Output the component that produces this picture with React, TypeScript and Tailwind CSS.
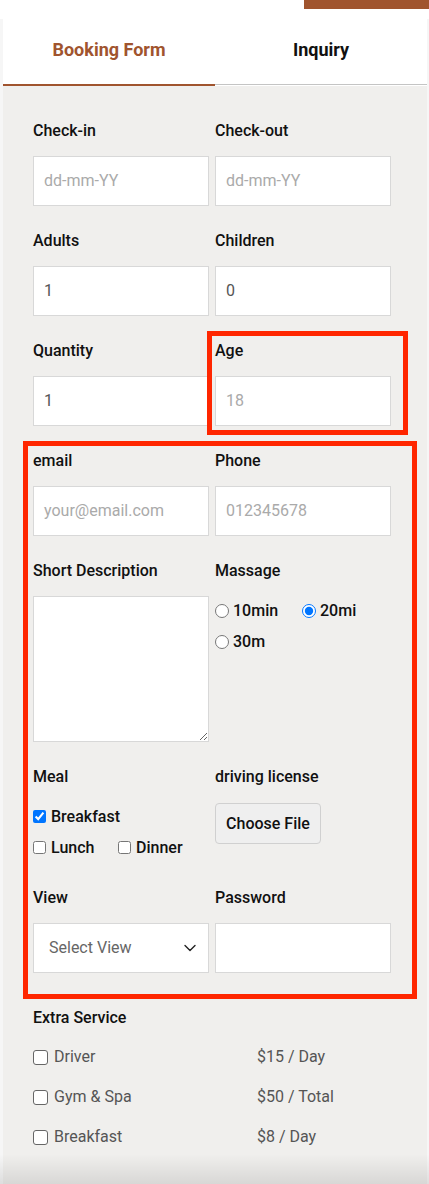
import React from "react";

const font = "font-['Roboto','Liberation_Sans',sans-serif]";

function Label({ children }: { children: React.ReactNode }) {
  return <div className="h-[20px] leading-[20px] text-[16px] font-medium text-[#111]">{children}</div>;
}

function Field({ label, value, placeholder }: { label: string; value?: string; placeholder?: string }) {
  return (
    <div>
      <Label>{label}</Label>
      <div className="mt-[15px] h-[50px] border border-[#d8d8d8] bg-white flex items-center pl-[10px] text-[16px]">
        {value !== undefined ? (
          <span className="text-[#555]">{value}</span>
        ) : (
          <span className="text-[#aaa]">{placeholder}</span>
        )}
      </div>
    </div>
  );
}

function Radio({ checked, label, w }: { checked?: boolean; label: string; w?: string }) {
  return (
    <label className={`flex items-center gap-[4px] h-[31px] ${w ?? ""}`}>
      <input type="radio" name="massage" defaultChecked={checked} className="m-0 w-[14px] h-[14px]" />
      <span className="text-[16px] font-medium text-[#111]">{label}</span>
    </label>
  );
}

function Check({ checked, label, w }: { checked?: boolean; label: string; w?: string }) {
  return (
    <label className={`flex items-center gap-[5px] h-[31px] ${w ?? ""}`}>
      <input type="checkbox" defaultChecked={checked} className="m-0 w-[13px] h-[13px]" />
      <span className="text-[16px] font-medium text-[#111]">{label}</span>
    </label>
  );
}

function Extra({ name, price }: { name: string; price: string }) {
  return (
    <div className="grid grid-cols-[224px_1fr] h-[40px] items-center text-[16px] text-[#555]">
      <div className="flex items-center gap-[6px]">
        <span className="w-[15px] h-[15px] border border-[#666] rounded-[3px] bg-white" />
        <span>{name}</span>
      </div>
      <div>{price}</div>
    </div>
  );
}

export default function App() {
  return (
    <div className={`relative h-[1184px] overflow-hidden bg-white ${font}`}>
      <div className="ml-auto h-[9px] w-[125px] bg-[#a0542e]" />
      <div className="mt-[10px] bg-[#f6f6f6] pl-[3px] pr-[2px] h-[1165px]">
        <div className="bg-white flex items-start h-[67px]">
          <div className="flex-1 h-[67px] border-b-2 border-[#a0542e] flex items-center justify-center pb-[5px] text-[18px] font-bold text-[#a0542e]">
            Booking Form
          </div>
          <div className="flex-1 h-[66px] border-b border-[#c4c4c4] flex items-center justify-center pb-[4px] text-[18px] font-bold text-[#111]">
            Inquiry
          </div>
        </div>
        <div className="bg-[#f0efed] pl-[30px] pt-[35px] h-[1098px]">
          <div className="grid grid-cols-[176px_176px] gap-x-[6px] gap-y-[25px]">
            <Field label="Check-in" placeholder="dd-mm-YY" />
            <Field label="Check-out" placeholder="dd-mm-YY" />
            <Field label="Adults" value="1" />
            <Field label="Children" value="0" />
            <Field label="Quantity" value="1" />
            <Field label="Age" placeholder="18" />
            <Field label="email" placeholder="your@email.com" />
            <Field label="Phone" placeholder="012345678" />
            <div>
              <Label>Short Description</Label>
              <textarea className="mt-[15px] block w-full h-[146px] border border-[#d8d8d8] bg-white outline-none" />
            </div>
            <div>
              <Label>Massage</Label>
              <div className="mt-[14px]">
                <div className="flex">
                  <Radio label="10min" w="w-[87px]" />
                  <Radio label="20mi" checked />
                </div>
                <Radio label="30m" />
              </div>
            </div>
            <div>
              <Label>Meal</Label>
              <div className="mt-[14px]">
                <Check label="Breakfast" checked />
                <div className="flex">
                  <Check label="Lunch" w="w-[85px]" />
                  <Check label="Dinner" />
                </div>
              </div>
            </div>
            <div>
              <Label>driving license</Label>
              <button className="mt-[16px] h-[41px] w-[106px] rounded-[4px] border border-[#d0d0d0] bg-[#efefef] text-[16px] font-medium text-[#111]">
                Choose File
              </button>
            </div>
            <div>
              <Label>View</Label>
              <div className="mt-[15px] h-[50px] border border-[#d8d8d8] bg-white flex items-center justify-between pl-[15px] pr-[11px] text-[16px] text-[#666]">
                <span>Select View</span>
                <svg width="14" height="14" viewBox="0 0 14 14" fill="none">
                  <path d="M2 4.5 L7 9.5 L12 4.5" stroke="#222" strokeWidth="1.4" strokeLinecap="round" strokeLinejoin="round" />
                </svg>
              </div>
            </div>
            <div>
              <Label>Password</Label>
              <div className="mt-[15px] h-[50px] border border-[#d8d8d8] bg-white" />
            </div>
          </div>
          <div className="mt-[35px]">
            <Label>Extra Service</Label>
            <div className="mt-[9px] w-[358px]">
              <Extra name="Driver" price="$15 / Day" />
              <Extra name="Gym & Spa" price="$50 / Total" />
              <Extra name="Breakfast" price="$8 / Day" />
            </div>
          </div>
        </div>
      </div>
      {/* annotation boxes */}
      <div className="absolute left-[207px] top-[331px] w-[201px] h-[104px] border-[5px] border-[#ff2600] pointer-events-none" />
      <div className="absolute left-[23px] top-[441px] w-[394px] h-[558px] border-[5px] border-[#ff2600] pointer-events-none" />
      {/* bottom shade */}
      <div className="absolute inset-x-0 bottom-0 h-[30px] bg-linear-to-b from-transparent to-black/10 pointer-events-none" />
    </div>
  );
}
